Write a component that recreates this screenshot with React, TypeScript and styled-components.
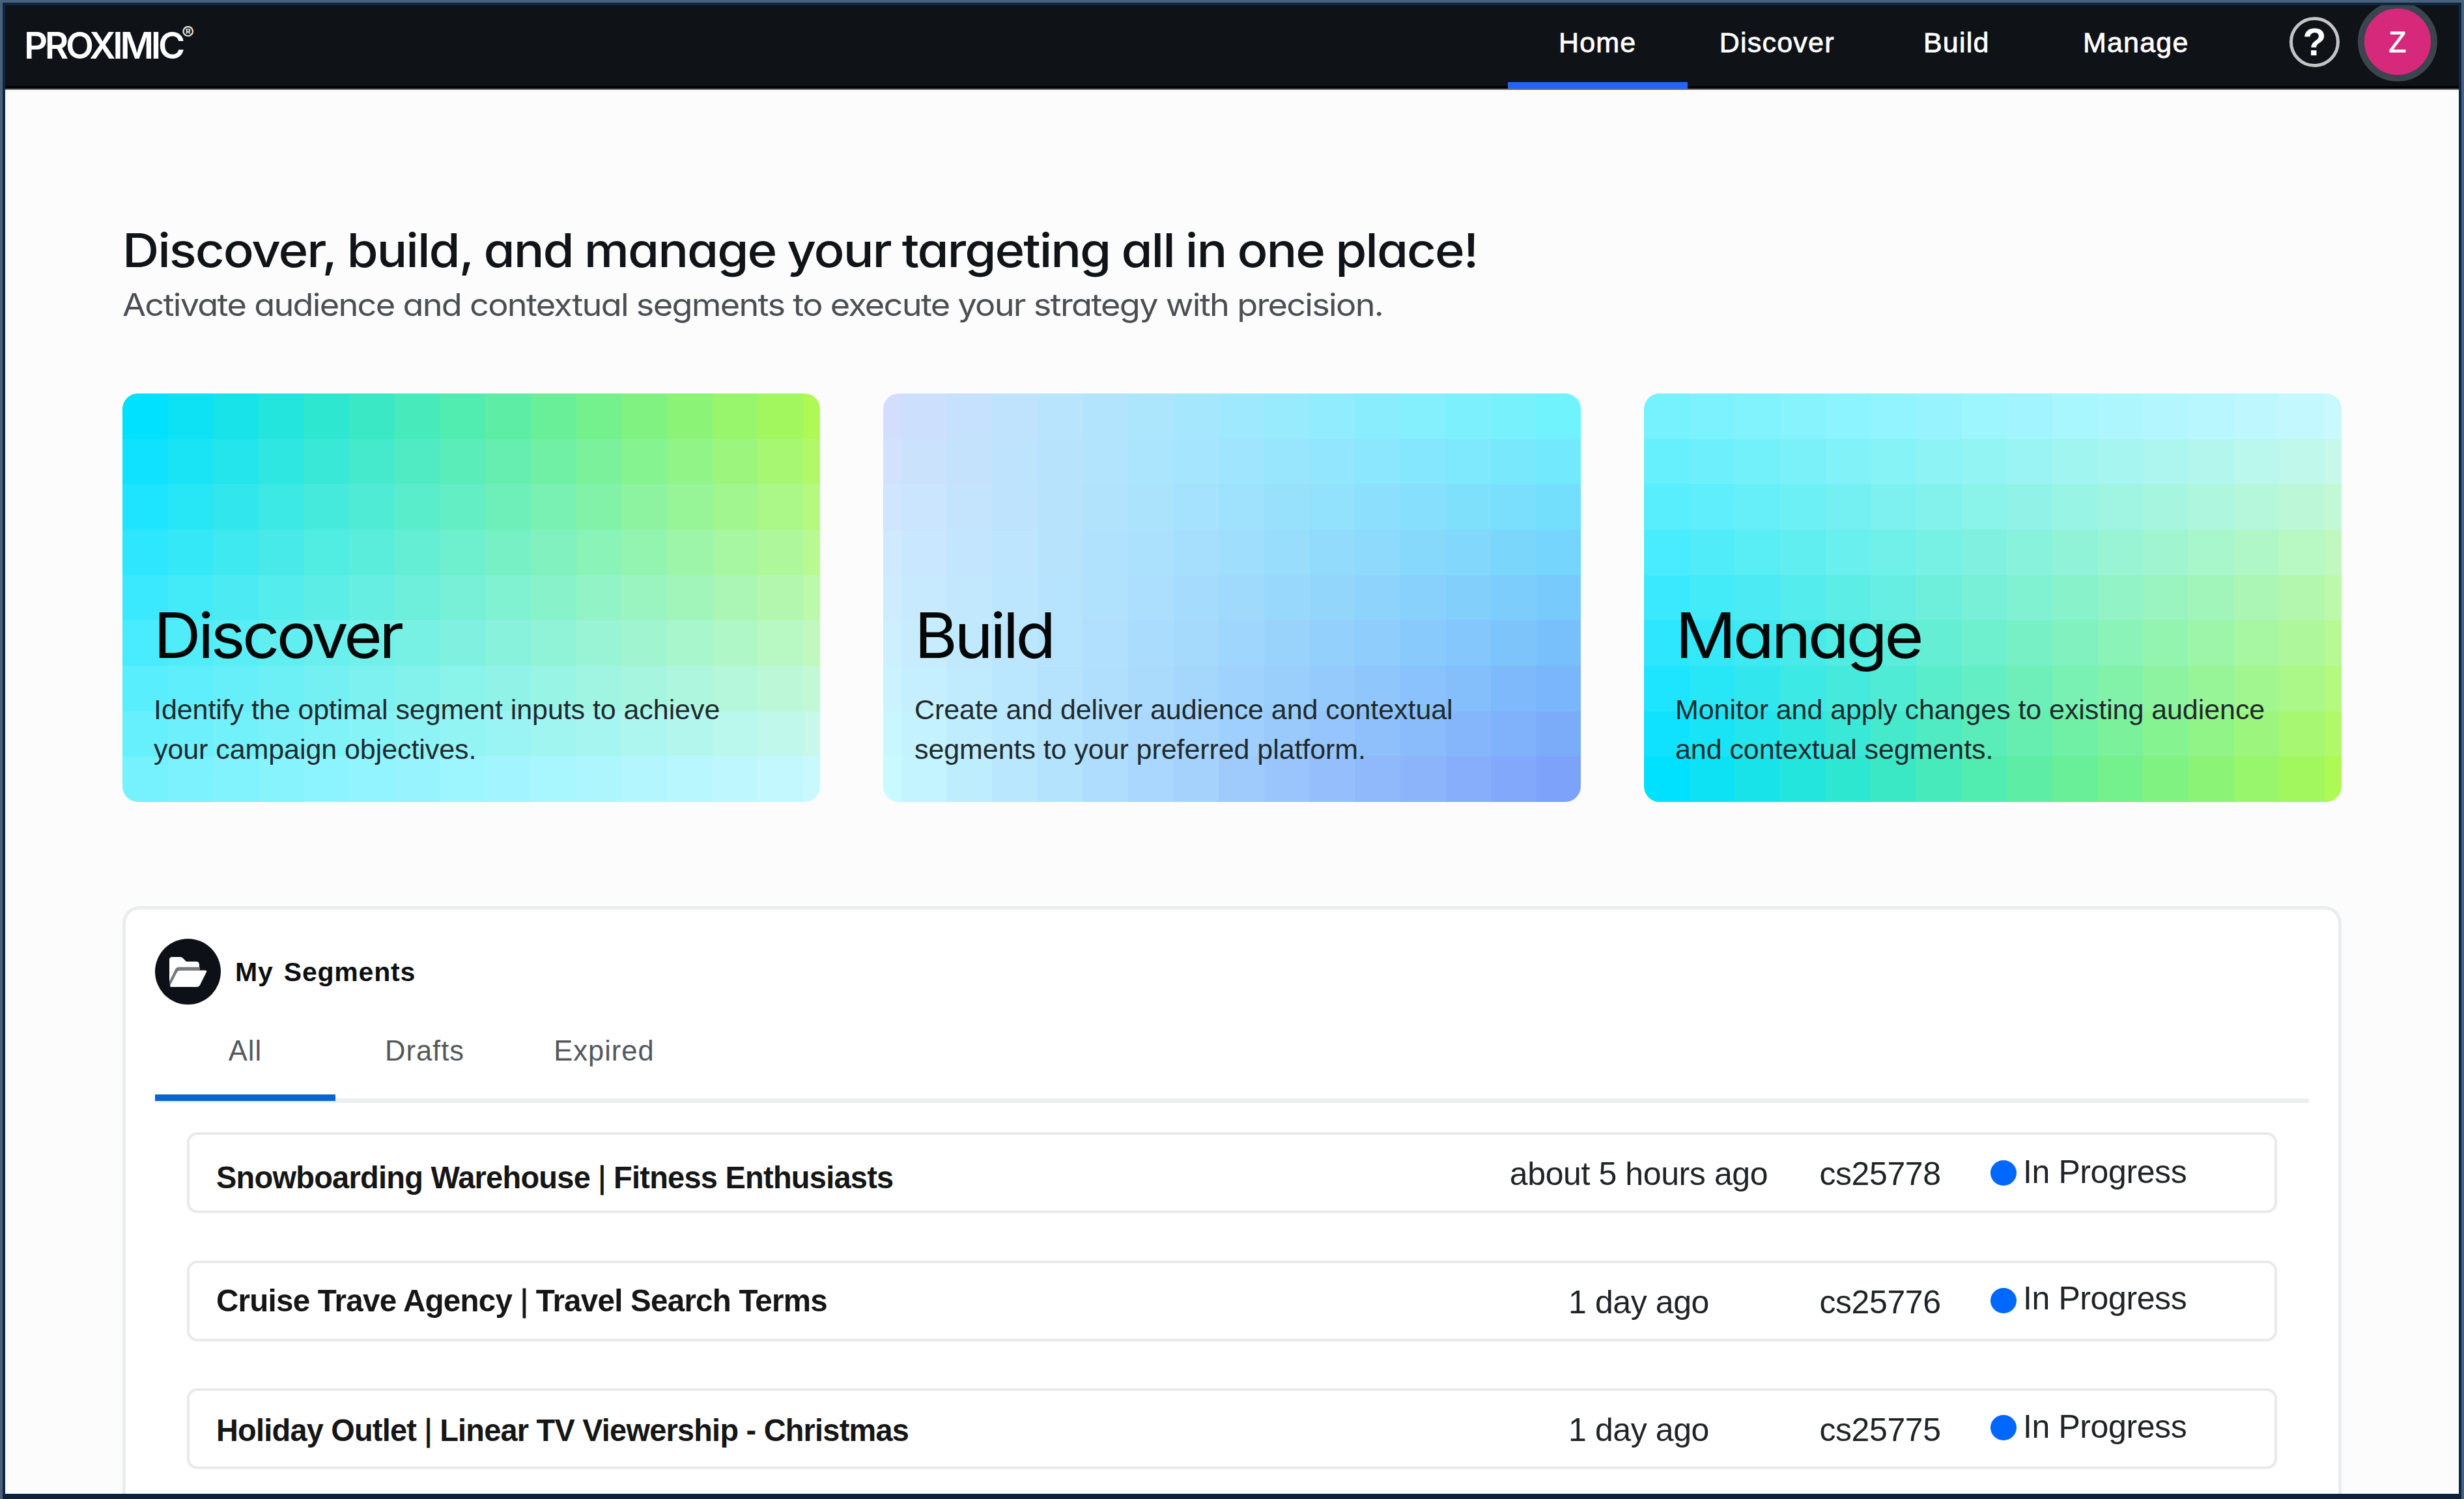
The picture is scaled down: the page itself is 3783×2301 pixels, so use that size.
import React from "react";
import styled, { createGlobalStyle } from "styled-components";

const arial = `"Liberation Sans", Arial, sans-serif`;
const geo = `Inter, "Open Sans", sans-serif`;

const GlobalStyle = createGlobalStyle`
  *, *::before, *::after { box-sizing: border-box; }
  html, body { margin: 0; padding: 0; background: #fff; }
  body { font-family: ${arial}; overflow: hidden; }
  h1, h2, p { margin: 0; font-weight: 400; }
`;

const Shell = styled.div`
  width: 3783px;
  height: 2301px;
  overflow: hidden;
  border: 4px solid #4a6078;
  border-bottom: 0;
`;

const Frame = styled.div`
  height: 2297px;
  overflow: hidden;
  display: flex;
  flex-direction: column;
  background: #fcfcfc;
  border: 4px solid #0c2846;
  border-bottom: 8px solid #08223f;
`;

const Header = styled.header`
  flex: none;
  height: 130px;
  background: #0f1217;
  border-bottom: 2px solid #6d6d6d;
  box-shadow: inset 0 -4px 0 #020203;
  display: flex;
  align-items: stretch;
  color: #fff;
`;

const Logo = styled.div`
  display: flex;
  align-items: flex-start;
  padding: 27px 0 0 29px;
  font: 600 56px/70px ${geo};
  letter-spacing: -4.3px;
  white-space: nowrap;
`;

const Registered = styled.sup`
  font: 600 29px/32px ${geo};
  letter-spacing: 0;
  margin-left: -1px;
  color: #e2e2e3;
`;

const Nav = styled.nav`
  margin-left: auto;
  display: flex;
`;

const NavItem = styled.a<{ $active?: boolean }>`
  width: 275.5px;
  height: 128px;
  padding-top: 32px;
  text-align: center;
  font-size: 43px;
  line-height: 50px;
  letter-spacing: 1.2px;
  -webkit-text-stroke: 0.8px #fff;
  border-bottom: 10px solid ${(p) => (p.$active ? "#2066f2" : "transparent")};
`;

const Tools = styled.div`
  display: flex;
  align-items: center;
  height: 112px;
  margin: 0 33px 0 98px;
  gap: 28px;
`;

const HelpButton = styled.div`
  width: 77px;
  height: 77px;
  border: 5px solid #c4c4c5;
  border-radius: 50%;
  text-align: center;
  font: 700 59px/68px ${arial};
`;

const Avatar = styled.div`
  width: 122px;
  height: 122px;
  flex: none;
  border: 10px solid #3c444d;
  border-radius: 50%;
  background: #d6297b;
  text-align: center;
  font-size: 44px;
  line-height: 103px;
  -webkit-text-stroke: 0.8px #fff;
`;

const Main = styled.main`
  flex: 1;
  padding: 0 180px;
  display: flex;
  flex-direction: column;
  min-height: 0;
`;

const Headline = styled.h1`
  align-self: flex-start;
  margin-top: 201px;
  margin-bottom: 1px;
  font: 500 72px/90px ${geo};
  font-feature-settings: "cv11";
  letter-spacing: -1.9px;
  word-spacing: -1.5px;
  color: #101317;
  white-space: nowrap;
  transform: scaleX(1.083);
  transform-origin: left;
`;

const Subline = styled.p`
  align-self: flex-start;
  font: 400 48px/60px ${geo};
  font-feature-settings: "cv11";
  letter-spacing: -1.6px;
  color: #4b4e52;
  white-space: nowrap;
  margin-top: 8px;
  transform: scaleX(1.089);
  transform-origin: left;
`;

const Cards = styled.section`
  display: grid;
  grid-template-columns: repeat(3, 1071px);
  column-gap: 97px;
  margin-top: 106px;
`;

const Card = styled.article`
  position: relative;
  height: 627px;
  border-radius: 24px;
  overflow: hidden;
  padding: 316px 49px 0 48px;
  display: flex;
  flex-direction: column;
`;

const Mosaic = styled.svg`
  position: absolute;
  inset: 0;
  width: 100%;
  height: 100%;
`;

const CardTitle = styled.h2<{ $stretch: number }>`
  position: relative;
  align-self: flex-start;
  font: 400 96px/110px ${geo};
  font-feature-settings: "cv11";
  letter-spacing: -4.5px;
  color: #050707;
  transform: scaleX(${(p) => p.$stretch});
  transform-origin: left;
`;

const CardText = styled.p`
  position: relative;
  margin-top: 29px;
  font-size: 43px;
  line-height: 61px;
  letter-spacing: -0.07px;
  color: #1f2a2e;
  white-space: pre;
`;

const Panel = styled.section`
  flex: 1;
  margin-top: 160px;
  background: #fff;
  border: 5px solid #ebecef;
  border-bottom: 0;
  border-radius: 26px 26px 0 0;
  padding: 45px 45px 0;
  display: flex;
  flex-direction: column;
`;

const PanelHead = styled.div`
  display: flex;
  align-items: center;
  gap: 22px;
  height: 101px;
`;

const FolderBadge = styled.div`
  width: 101px;
  height: 101px;
  border-radius: 50%;
  background: #0d1117;
  display: grid;
  place-items: center;
`;

const PanelTitle = styled.h2`
  font: 700 41px/50px ${arial};
  letter-spacing: 0.8px;
  word-spacing: 4px;
  color: #0d0f12;
`;

const Tabs = styled.div`
  display: flex;
  height: 151px;
  border-bottom: 7px solid #eceff1;
`;

const Tab = styled.div<{ $active?: boolean }>`
  width: 277px;
  height: 148px;
  padding-top: 46px;
  text-align: center;
  font-size: 43.5px;
  line-height: 50px;
  letter-spacing: 1px;
  color: #54585c;
  border-bottom: 10px solid ${(p) => (p.$active ? "#0765d0" : "transparent")};
  & + & { margin-left: -1.5px; }
`;

const Rows = styled.div`
  display: flex;
  flex-direction: column;
  gap: 72.5px;
  padding: 45px 49px 0 49px;
`;

const Row = styled.div`
  height: 124px;
  border: 4px solid #e9e9e9;
  border-radius: 16px;
  display: grid;
  grid-template-columns: 1997px 456px 285px 1fr;
  color: #212427;
  font-size: 50px;
  line-height: 56px;
  letter-spacing: -0.4px;
  white-space: nowrap;
`;

const NameCell = styled.div<{ $top: number }>`
  padding: ${(p) => p.$top}px 0 0 41px;
`;

const Name = styled.div<{ $stretch: number }>`
  width: max-content;
  font-size: 49px;
  font-weight: 700;
  letter-spacing: -0.8px;
  color: #161616;
  transform: scaleX(${(p) => p.$stretch});
  transform-origin: left;
`;

const Divider = styled.span`
  font-weight: 400;
  -webkit-text-stroke: 1px #161616;
`;

const Cell = styled.div<{ $top: number }>`
  padding-top: ${(p) => p.$top}px;
  text-align: center;
`;

const Status = styled.div<{ $top: number }>`
  padding: ${(p) => p.$top}px 0 0 27px;
  display: flex;
  gap: 10px;
`;

const Dot = styled.i<{ $top: number }>`
  width: 40px;
  height: 39px;
  border-radius: 50%;
  background: #0067ff;
  margin-top: ${(p) => p.$top}px;
`;

type RGB = [number, number, number];
type Corners = { tl: RGB; tr: RGB; bl: RGB; br: RGB };

const mix = (a: RGB, b: RGB, t: number): RGB =>
  [0, 1, 2].map((i) => a[i] + (b[i] - a[i]) * t) as RGB;

function Tiles({ c, lead = 0 }: { c: Corners; lead?: number }) {
  const size = 69.67;
  const cells: React.ReactNode[] = [];
  for (let r = 0; r < 9; r++) {
    for (let k = 0; k < 16; k++) {
      const color = mix(mix(c.tl, c.tr, k / 15), mix(c.bl, c.br, k / 15), r / 8).map(Math.round);
      cells.push(
        <rect
          key={`${r}-${k}`}
          x={Math.round(k * size - lead)}
          y={Math.round(r * size)}
          width={71}
          height={71}
          fill={`rgb(${color.join(",")})`}
        />
      );
    }
  }
  return (
    <Mosaic viewBox="0 0 1071 627" aria-hidden="true" shapeRendering="crispEdges">
      {cells}
    </Mosaic>
  );
}

const cyan: RGB = [0, 224, 255];
const lime: RGB = [174, 249, 84];
const aqua: RGB = [117, 242, 253];
const ice: RGB = [202, 248, 255];

const cards: { title: string; text: string; lead: number; stretch: number; c: Corners }[] = [
  {
    title: "Discover",
    text: "Identify the optimal segment inputs to achieve\nyour campaign objectives.",
    lead: 0,
    stretch: 1.048,
    c: { tl: cyan, tr: lime, bl: aqua, br: ice },
  },
  {
    title: "Build",
    text: "Create and deliver audience and contextual\nsegments to your preferred platform.",
    lead: 42,
    stretch: 1.05,
    c: { tl: [211, 222, 253], tr: [112, 243, 253], bl: [200, 250, 255], br: [124, 162, 250] },
  },
  {
    title: "Manage",
    text: "Monitor and apply changes to existing audience\nand contextual segments.",
    lead: 0,
    stretch: 1.08,
    c: { tl: aqua, tr: ice, bl: cyan, br: lime },
  },
];

const segments = [
  { name: ["Snowboarding Warehouse", "Fitness Enthusiasts"], age: "about 5 hours ago", id: "cs25778", nameTop: 37, stretch: 0.959, top: 32, statusTop: 29, dotTop: 10 },
  { name: ["Cruise Trave Agency", "Travel Search Terms"], age: "1 day ago", id: "cs25776", nameTop: 29, stretch: 0.971, top: 32, statusTop: 26, dotTop: 12 },
  { name: ["Holiday Outlet", "Linear TV Viewership - Christmas"], age: "1 day ago", id: "cs25775", nameTop: 32, stretch: 0.957, top: 32, statusTop: 27, dotTop: 10 },
];

export default function App() {
  return (
    <>
      <GlobalStyle />
      <Shell>
        <Frame>
          <Header>
            <Logo>
              PROXIMIC<Registered>®</Registered>
            </Logo>
            <Nav>
              <NavItem $active>Home</NavItem>
              <NavItem>Discover</NavItem>
              <NavItem>Build</NavItem>
              <NavItem>Manage</NavItem>
            </Nav>
            <Tools>
              <HelpButton>?</HelpButton>
              <Avatar>Z</Avatar>
            </Tools>
          </Header>
          <Main>
            <Headline>Discover, build, and manage your targeting all in one place!</Headline>
            <Subline>Activate audience and contextual segments to execute your strategy with precision.</Subline>
            <Cards>
              {cards.map((card) => (
                <Card key={card.title}>
                  <Tiles c={card.c} lead={card.lead} />
                  <CardTitle $stretch={card.stretch}>{card.title}</CardTitle>
                  <CardText>{card.text}</CardText>
                </Card>
              ))}
            </Cards>
            <Panel>
              <PanelHead>
                <FolderBadge>
                  <svg width="58" height="46" viewBox="0 0 58 46" aria-hidden="true">
                    <path d="M0 38V4Q0 0 4 0H17Q19 0 21 2L26 7H41Q46 7 46 12V16H14Q11 16 9 20Z" fill="#fff" />
                    <path d="M0 38L9 19Q11 15.500 15 15.500H47V20H17Q14 20 12 24L1 44Z" fill="#77797c" />
                    <path d="M16 20.500H55Q58 20.500 57 23L47 43Q45.500 46 42 46H3Q0 46 1.500 43L12 23Q13.500 20.500 16 20.500Z" fill="#fff" />
                  </svg>
                </FolderBadge>
                <PanelTitle>My Segments</PanelTitle>
              </PanelHead>
              <Tabs>
                <Tab $active>All</Tab>
                <Tab>Drafts</Tab>
                <Tab>Expired</Tab>
              </Tabs>
              <Rows>
                {segments.map((s) => (
                  <Row key={s.id}>
                    <NameCell $top={s.nameTop}>
                      <Name $stretch={s.stretch}>
                        {s.name[0]} <Divider>|</Divider> {s.name[1]}
                      </Name>
                    </NameCell>
                    <Cell $top={s.top}>{s.age}</Cell>
                    <Cell $top={s.top}>{s.id}</Cell>
                    <Status $top={s.statusTop}>
                      <Dot $top={s.dotTop} />
                      In Progress
                    </Status>
                  </Row>
                ))}
              </Rows>
            </Panel>
          </Main>
        </Frame>
      </Shell>
    </>
  );
}
